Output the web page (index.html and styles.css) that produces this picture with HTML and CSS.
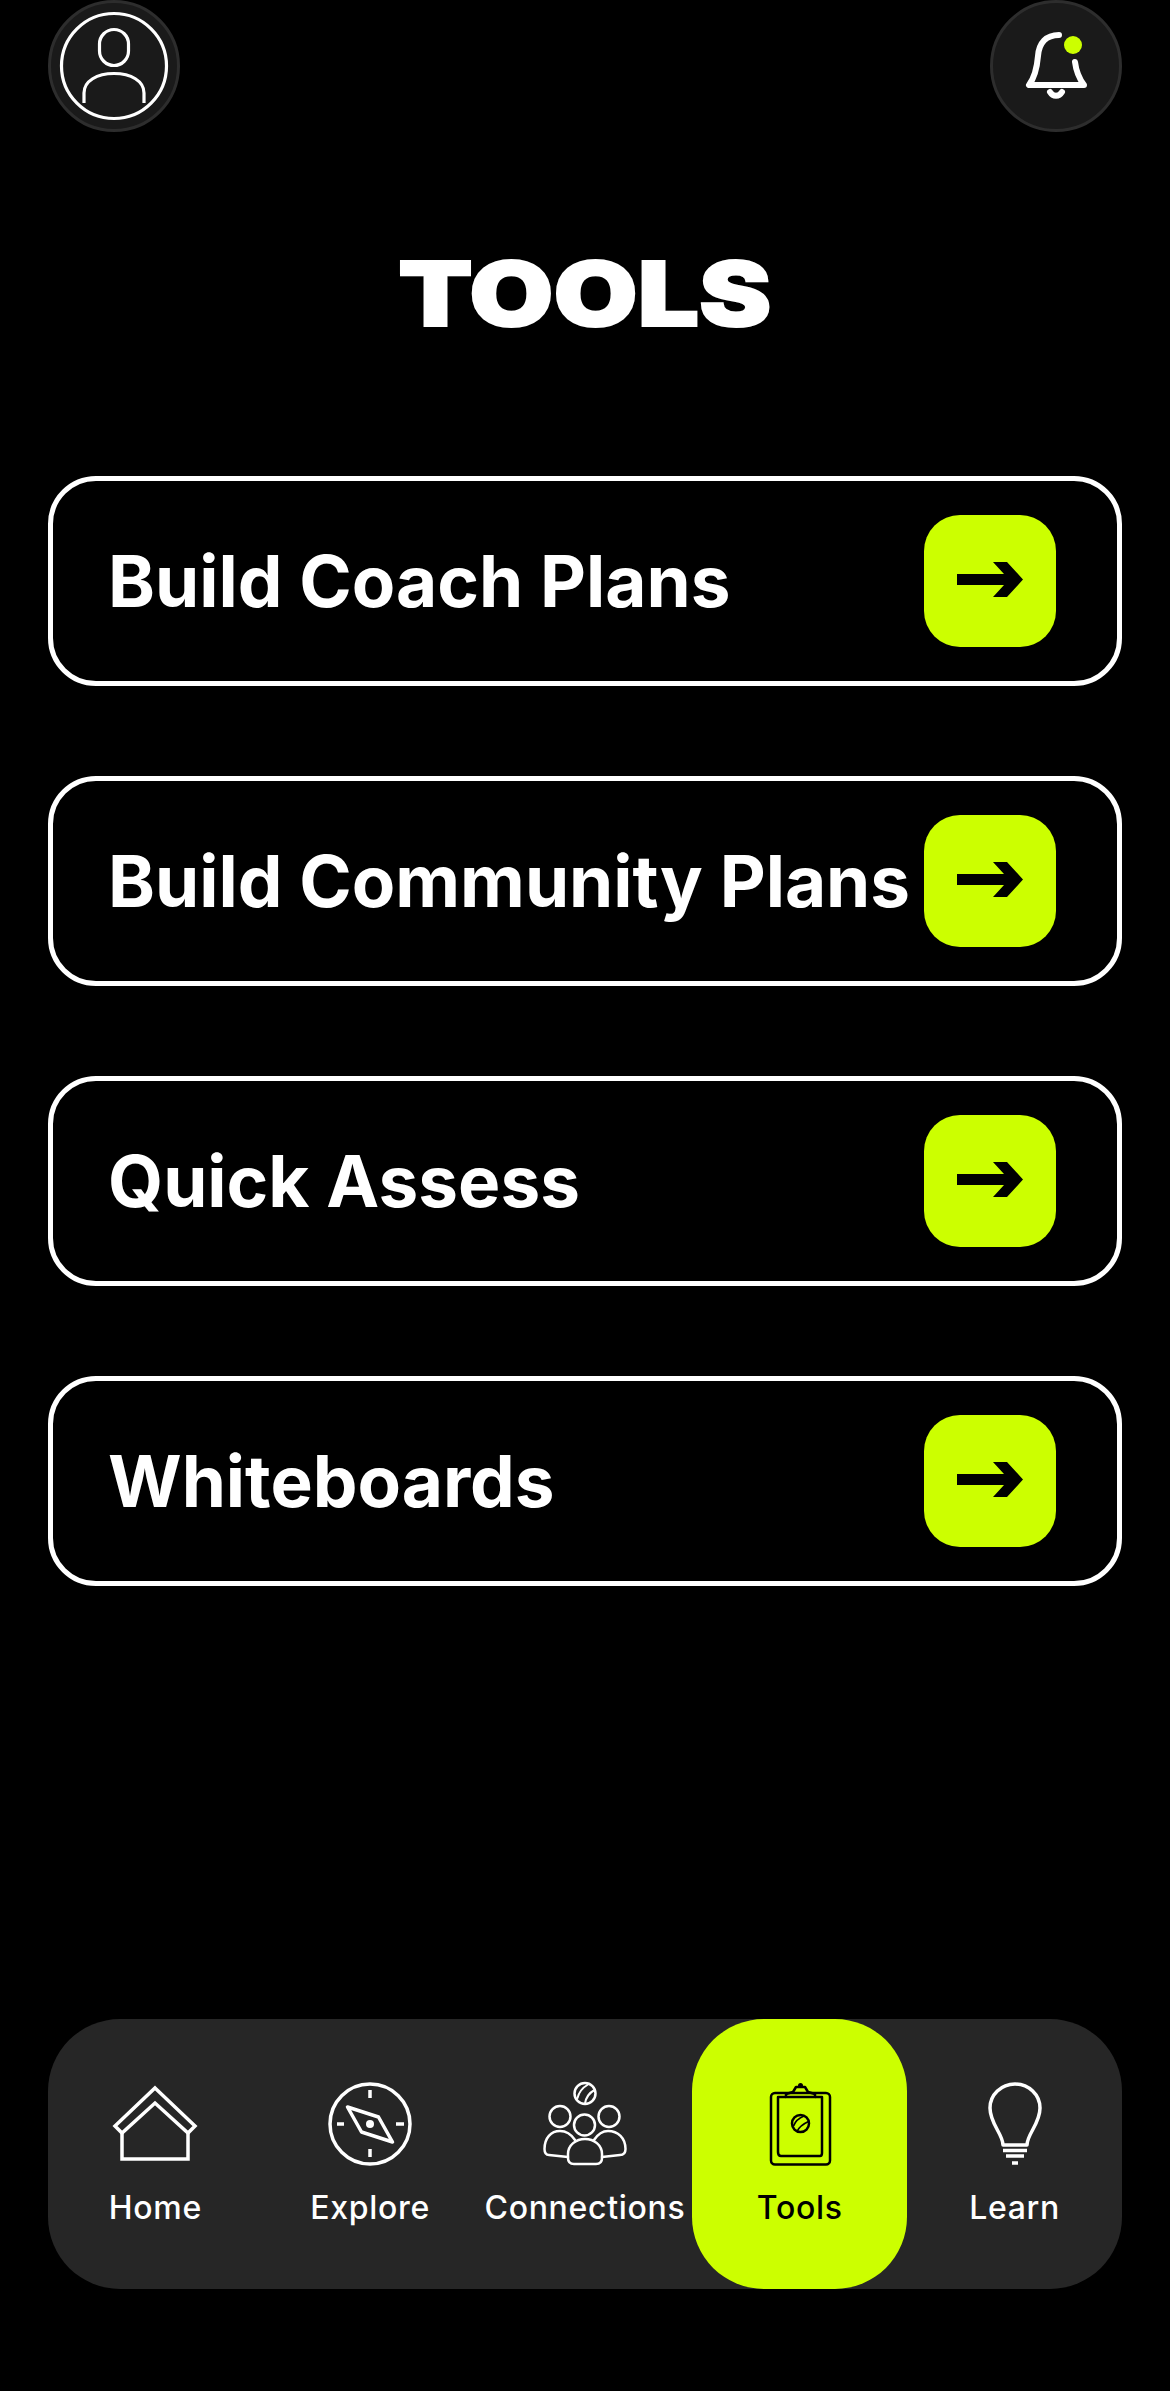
FILE: index.html
```html
<!DOCTYPE html>
<html lang="en">
<head>
  <meta charset="UTF-8" />
  <meta name="viewport" content="width=device-width, initial-scale=1" />
  <title>Tools</title>
  <link rel="stylesheet" href="styles.css">
</head>
<body>
  <div class="page">
    <header class="topbar">
      <button class="round-btn" aria-label="Profile">
        <svg class="round-icon" viewBox="0 0 132 132" fill="none" stroke="#fff" stroke-width="3.2">
          <circle cx="66" cy="66" r="52.5" />
          <rect x="51.5" y="29.5" width="29" height="36" rx="14.5" />
          <path d="M36 103V93C36 81 49 73.500 66 73.500S96 81 96 93V103" />
        </svg>
      </button>
      <button class="round-btn" aria-label="Notifications">
        <svg class="round-icon" viewBox="0 0 132 132" fill="none" stroke="#fff" stroke-width="6" stroke-linecap="round" stroke-linejoin="round">
          <path d="M69 35C56 35 49 43 48 56C47 68 45 77 39 85H94C88 77 86 70 85 62" />
          <path d="M60 92C63 97 69 97 72 92" />
          <circle class="dot" cx="83" cy="45" r="9" />
        </svg>
      </button>
    </header>

    <h1 class="title">TOOLS</h1>

    <main class="tool-list">
      <a class="tool-card" href="#">
        <span class="tool-name">Build Coach Plans</span>
        <span class="tool-go">
          <svg viewBox="0 0 132 132"><polygon points="33,59 80,59 69,47 83,47 99,64.500 83,82 69,82 80,70 33,70" /></svg>
        </span>
      </a>
      <a class="tool-card" href="#">
        <span class="tool-name">Build Community Plans</span>
        <span class="tool-go">
          <svg viewBox="0 0 132 132"><polygon points="33,59 80,59 69,47 83,47 99,64.500 83,82 69,82 80,70 33,70" /></svg>
        </span>
      </a>
      <a class="tool-card" href="#">
        <span class="tool-name">Quick Assess</span>
        <span class="tool-go">
          <svg viewBox="0 0 132 132"><polygon points="33,59 80,59 69,47 83,47 99,64.500 83,82 69,82 80,70 33,70" /></svg>
        </span>
      </a>
      <a class="tool-card" href="#">
        <span class="tool-name">Whiteboards</span>
        <span class="tool-go">
          <svg viewBox="0 0 132 132"><polygon points="33,59 80,59 69,47 83,47 99,64.500 83,82 69,82 80,70 33,70" /></svg>
        </span>
      </a>
    </main>

    <nav class="tabbar">
      <a class="tab" href="#">
        <svg class="tab-icon" viewBox="0 0 84 84" fill="none" stroke="currentColor" stroke-width="3.500">
          <path d="M42 6L82 44L75 51L42 21L9 51L2 44Z" />
          <path d="M9 51V77H75V51" />
        </svg>
        <span>Home</span>
      </a>
      <a class="tab" href="#">
        <svg class="tab-icon" viewBox="0 0 84 84" fill="none" stroke="currentColor" stroke-width="3.500">
          <circle cx="42" cy="42" r="40" />
          <path d="M42 8V16M42 67V75M9 42H16M68 42H76" />
          <path d="M19.500 25L50.500 35L64.500 60L33.500 50Z" stroke-linejoin="round" />
          <circle cx="42" cy="42" r="4" fill="currentColor" stroke="none" />
        </svg>
        <span>Explore</span>
      </a>
      <a class="tab" href="#">
        <svg class="tab-icon" viewBox="0 0 84 84" fill="none" stroke="currentColor" stroke-width="2.500" stroke-linecap="round">
          <circle cx="42" cy="11.500" r="10.500" />
          <path d="M34.500 16C36 10 39 6 45 2.500M42 21.500C43 15 46 11 51.500 8" stroke-width="2" />
          <circle cx="17" cy="34.500" r="10.500" />
          <circle cx="66" cy="34.500" r="10.500" />
          <circle cx="41.500" cy="43" r="10.500" />
          <path d="M32 58C28 52 22 49 17 49C8 49 1.500 56 1.500 67C1.500 71 3 73 6 73L25 75" />
          <path d="M51 58C55 52 60 49 65 49C75 49 82.500 56 82.500 67C82.500 71 81 73 77 73L59 75" />
          <path d="M25 72C25 63 33 57 42 57C51 57 59 63 59 72V76C59 80 57 82 53 82H31C27 82 25 80 25 76Z" />
        </svg>
        <span>Connections</span>
      </a>
      <a class="tab tab-active" href="#">
        <svg class="tab-icon" viewBox="0 0 84 84" fill="none" stroke="currentColor" stroke-width="2.500" stroke-linejoin="round">
          <rect x="13" y="11" width="59" height="71.500" rx="4" />
          <path d="M28 15H20V70C20 72 21 74 23 74H62C63 74 64 73 64 71V15H57" />
          <path d="M28 15H57V12L50 10L47 5H38L35 10L28 12Z" />
          <circle cx="42.500" cy="3.500" r="2.500" fill="currentColor" stroke="none" />
          <circle cx="42.500" cy="41.500" r="8.500" />
          <path d="M35.500 44C37 40 41 36 46 34M39 49.500C41 45 45 42 50.500 39.500" stroke-width="1.800" />
        </svg>
        <span>Tools</span>
      </a>
      <a class="tab" href="#">
        <svg class="tab-icon" viewBox="0 0 84 84" fill="none" stroke="currentColor" stroke-width="3.500">
          <path d="M30 63C30 52 17 42 17 26A25 24 0 0 1 67 26C67 42 54 52 54 63Z" stroke-linejoin="round" />
          <path d="M30 68.500H54M33 74H51" />
          <path d="M39 81H45" stroke-width="3.500" />
        </svg>
        <span>Learn</span>
      </a>
    </nav>
  </div>
</body>
</html>
```

FILE: styles.css
```css
* {
  box-sizing: border-box;
}
html, body {
  margin: 0;
  background: #000;
}
body {
  font-family: Inter, "Liberation Sans", sans-serif;
  color: #fff;
}
a {
  text-decoration: none;
  color: inherit;
}
.page {
  display: flex;
  flex-direction: column;
  height: 2391px;
  padding: 0 48px 102px;
}

/* top row */
.topbar {
  display: flex;
  justify-content: space-between;
}
.round-btn {
  width: 132px;
  height: 132px;
  padding: 0;
  border: 3px solid #2d2d2d;
  border-radius: 50%;
  background: #1a1a1a;
  position: relative;
}
.round-icon {
  position: absolute;
  top: -3px;
  left: -3px;
  width: 132px;
  height: 132px;
}
.dot {
  fill: #ccff00;
  stroke: none;
}

.title {
  align-self: center;
  margin: 122px 0 0;
  font-size: 89px;
  line-height: 80px;
  font-weight: 900;
  -webkit-text-stroke: 2px #fff;
  transform: scaleX(1.22);
}

/* tool rows */
.tool-list {
  display: flex;
  flex-direction: column;
  gap: 90px;
  margin-top: 142px;
}
.tool-card {
  display: flex;
  align-items: center;
  justify-content: space-between;
  height: 210px;
  padding: 0 61px 0 55px;
  border: 5px solid #fff;
  border-radius: 48px;
}
.tool-name {
  font-size: 71px;
  font-weight: 700;
  white-space: nowrap;
}
.tool-go {
  flex-shrink: 0;
  width: 132px;
  height: 132px;
  border-radius: 36px;
  background: #ccff00;
}
.tool-go svg {
  display: block;
  fill: #000;
}

/* bottom nav */
.tabbar {
  display: grid;
  grid-template-columns: repeat(5, 1fr);
  height: 270px;
  margin-top: auto;
  border-radius: 72px;
  background: #262626;
}
.tab {
  display: flex;
  flex-direction: column;
  align-items: center;
  padding-top: 63px;
  font-size: 32px;
  font-weight: 500;
  letter-spacing: 0.7px;
  line-height: 40px;
  white-space: nowrap;
}
.tab-icon {
  width: 84px;
  height: 84px;
  margin-bottom: 22px;
  overflow: visible;
}
.tab-active {
  border-radius: 72px;
  background: #ccff00;
  color: #000;
}
```
